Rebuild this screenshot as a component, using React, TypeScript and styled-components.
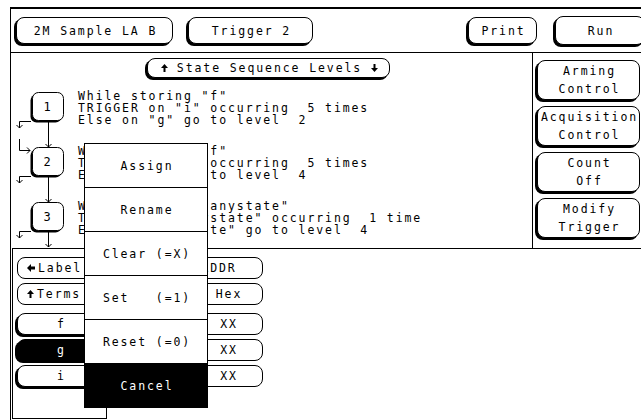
import React from 'react'
import styled, { createGlobalStyle, css } from 'styled-components'

const Global = createGlobalStyle`
  * {
    box-sizing: border-box;
  }

  html,
  body,
  #root {
    margin: 0;
    padding: 0;
    background: #fff;
  }

  body {
    font-family: 'DejaVu Sans Mono', 'Liberation Mono', monospace;
    color: #000;
    overflow: hidden;
  }
`

const Screen = styled.div`
  position: relative;
  width: 641px;
  height: 420px;
  overflow: hidden;
  padding: 7px 0 0 10px;
  font-size: 11.5px;
  letter-spacing: 1.9px;
`

const Frame = styled.div`
  height: 100%;
  border-top: 2px solid #000;
  border-left: 1px solid #000;
  display: flex;
  flex-direction: column;
`

const TopBar = styled.div`
  flex: none;
  height: 44px;
  display: flex;
  align-items: center;
  padding-left: 5px;
  border-bottom: 1px solid #000;
`

const Key = styled.div<{ $w: number; $h: number; $ml?: number; $raised?: boolean; $dark?: boolean; $left?: boolean }>`
  flex: none;
  width: ${p => p.$w}px;
  height: ${p => p.$h}px;
  margin-left: ${p => p.$ml ?? 0}px;
  border: 1px solid #000;
  border-radius: 8px;
  display: flex;
  flex-direction: column;
  align-items: ${p => (p.$left ? 'flex-start' : 'center')};
  justify-content: center;
  padding-left: ${p => (p.$left ? 9 : 2)}px;
  line-height: 18px;
  white-space: pre;
  background: ${p => (p.$dark ? '#000' : '#fff')};
  color: ${p => (p.$dark ? '#fff' : '#000')};
  ${p =>
    p.$raised &&
    css`
      box-shadow: -2px 2px 0 #000;
    `}
`

const KeyRow = styled.span<{ $gap?: number }>`
  display: flex;
  align-items: center;
  gap: ${p => p.$gap ?? 9}px;
`

const Main = styled.div`
  flex: none;
  height: 195px;
  display: flex;
`

const SeqArea = styled.div`
  flex: 1;
  border-right: 1px solid #000;
  padding-top: 5px;
  display: flex;
  flex-direction: column;
`

const RightCol = styled.div`
  flex: none;
  width: 108px;
  padding: 7px 0 0 4px;
  display: flex;
  flex-direction: column;
  gap: 6px;
`

const Levels = styled.div`
  margin-top: 12px;
  display: grid;
  grid-template-columns: 67px 1fr;
`

const LevelTexts = styled.div`
  display: flex;
  flex-direction: column;
  gap: 19px;
`

const LevelText = styled.div`
  height: 36px;
  line-height: 12px;
  white-space: pre;
`

const Lower = styled.div`
  flex: 1;
  margin-left: 1px;
  border-top: 1px solid #000;
  display: flex;
  align-items: flex-start;
`

const ListBox = styled.div`
  flex: none;
  width: 95px;
  height: 170px;
  border-left: 1px solid #000;
  border-right: 1px solid #000;
  border-bottom: 1px solid #000;
  padding: 8px 0 0 4px;
`

const ValueCol = styled.div`
  flex: none;
  width: 90px;
  margin-left: 66px;
  padding-top: 8px;
  display: flex;
  flex-direction: column;
  align-items: flex-end;
`

const Group = styled.div<{ $mt?: number }>`
  display: flex;
  flex-direction: column;
  align-items: inherit;
  gap: 4px;
  margin-top: ${p => p.$mt ?? 0}px;
`

const Popup = styled.div`
  position: absolute;
  left: 84px;
  top: 143px;
  width: 124px;
  height: 265px;
  border: 1px solid #000;
  background: #fff;
  display: flex;
  flex-direction: column;
  z-index: 2;
`

const PopItem = styled.div<{ $dark?: boolean }>`
  flex: 1;
  display: flex;
  align-items: center;
  justify-content: center;
  padding-left: 2px;
  white-space: pre;
  border-bottom: 1px solid #000;
  background: ${p => (p.$dark ? '#000' : '#fff')};
  color: ${p => (p.$dark ? '#fff' : '#000')};

  &:last-child {
    border-bottom: none;
  }
`

const Up = () => (
  <svg width="7" height="8" viewBox="0 0 7 8">
    <polygon points="3.5,0 7,4 4.5,4 4.5,8 2.5,8 2.5,4 0,4" fill="#000" />
  </svg>
)

const Down = () => (
  <svg width="7" height="8" viewBox="0 0 7 8">
    <polygon points="3.5,8 7,4 4.5,4 4.5,0 2.5,0 2.5,4 0,4" fill="#000" />
  </svg>
)

const Left = () => (
  <svg width="8" height="8" viewBox="0 0 8 8">
    <polygon points="0,4 4,0 4,2.5 8,2.5 8,5.5 4,5.5 4,8" fill="#000" />
  </svg>
)

// flow chart of the three sequence levels, drawn in local coords
const boxes = [2, 57, 112]

const Flow = () => (
  <svg width="67" height="158" viewBox="0 0 67 158" style={{ overflow: 'visible' }}>
    <g fill="none" stroke="#000" strokeWidth="1">
      <path d="M37.5,32 V57 M34.5,54 L37.5,57 L40.5,54" />
      <path d="M37.5,87 V112 M34.5,109 L37.5,112 L40.5,109" />
      <path d="M37.5,142 V157 M34.5,154 L37.5,157 L40.5,154" />
      <path d="M20,31.5 H8.5 V38 M5.5,35 L8.5,38 L11.5,35" />
      <path d="M8.5,49 V60.5 H19 M16,57.5 L19,60.5 L16,63.5" />
      <path d="M20,86.5 H8.5 V93 M5.5,90 L8.5,93 L11.5,90" />
      <path d="M20,141.5 H8.5 V148 M5.5,145 L8.5,148 L11.5,145" />
    </g>
    {boxes.map((y, i) => (
      <g key={i}>
        <rect x="19.5" y={y + 2.5} width="31" height="28" rx="6" fill="#000" />
        <rect x="21.5" y={y + 0.5} width="31" height="28" rx="6" fill="#fff" stroke="#000" />
        <text
          x="37"
          y={y + 19}
          textAnchor="middle"
          fontSize="12"
          fontFamily="'DejaVu Sans Mono', monospace"
          fill="#000"
        >
          {i + 1}
        </text>
      </g>
    ))}
  </svg>
)

const levels = [
  ['While storing "f"', 'TRIGGER on "i" occurring  5 times', 'Else on "g" go to level  2'],
  ['While storing "f"', 'TRIGGER on "i" occurring  5 times', 'Else on "g" go to level  4'],
  ['While storing "anystate"', 'TRIGGER on "anystate" occurring  1 time', 'Else on "anystate" go to level  4'],
]

const sideKeys = [
  ['Arming', 'Control'],
  ['Acquisition', 'Control'],
  ['Count', 'Off'],
  ['Modify', 'Trigger'],
]

const menu = ['Assign', 'Rename', 'Clear (=X)', 'Set   (=1)', 'Reset (=0)']

export default function App() {
  return (
    <Screen>
      <Global />
      <Frame>
        <TopBar>
          <Key $w={157} $h={27} $raised>2M Sample LA B</Key>
          <Key $w={125} $h={27} $ml={15} $raised>Trigger 2</Key>
          <Key $w={69} $h={27} $ml={155} $raised>Print</Key>
          <Key $w={90} $h={29} $ml={18} $raised>Run</Key>
        </TopBar>

        <Main>
          <SeqArea>
            <Key $w={243} $h={20} $ml={136} $raised>
              <KeyRow>
                <Up />
                State Sequence Levels
                <Down />
              </KeyRow>
            </Key>
            <Levels>
              <Flow />
              <LevelTexts>
                {levels.map((lines, i) => (
                  <LevelText key={i}>{lines.join('\n')}</LevelText>
                ))}
              </LevelTexts>
            </Levels>
          </SeqArea>
          <RightCol>
            {sideKeys.map(([a, b]) => (
              <Key key={a} $w={103} $h={40} $raised>
                <span>{a}</span>
                <span>{b}</span>
              </Key>
            ))}
          </RightCol>
        </Main>

        <Lower>
          <ListBox>
            <Group>
              <Key $w={95} $h={22} $left>
                <KeyRow $gap={3}>
                  <Left />
                  Label
                </KeyRow>
              </Key>
              <Key $w={95} $h={22} $left>
                <KeyRow $gap={3}>
                  <Up />
                  Terms
                </KeyRow>
              </Key>
            </Group>
            <Group $mt={8}>
              <Key $w={87} $h={22} $raised>f</Key>
              <Key $w={87} $h={22} $raised $dark>g</Key>
              <Key $w={87} $h={22} $raised>i</Key>
            </Group>
          </ListBox>
          <ValueCol>
            <Group>
              <Key $w={90} $h={22}>ADDR</Key>
              <Key $w={70} $h={22}>Hex</Key>
            </Group>
            <Group $mt={8}>
              <Key $w={70} $h={22}>XX</Key>
              <Key $w={70} $h={22}>XX</Key>
              <Key $w={70} $h={22}>XX</Key>
            </Group>
          </ValueCol>
        </Lower>
      </Frame>

      <Popup>
        {menu.map(m => (
          <PopItem key={m}>{m}</PopItem>
        ))}
        <PopItem $dark>Cancel</PopItem>
      </Popup>
    </Screen>
  )
}
